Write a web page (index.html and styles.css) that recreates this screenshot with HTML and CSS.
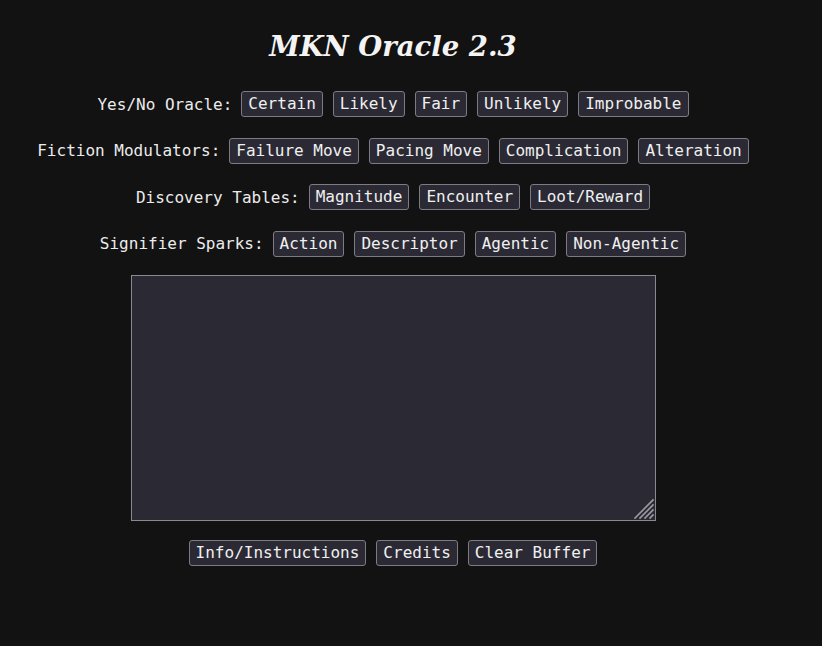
FILE: index.html
```html
<!DOCTYPE html>
<html>
<head>
<meta charset="utf-8">
<link rel="stylesheet" href="styles.css">
</head>
<body>
<main class="app">
  <h1 class="title">MKN Oracle 2.3</h1>
  <div class="row first"><span class="label">Yes/No Oracle:</span><button>Certain</button><button>Likely</button><button>Fair</button><button>Unlikely</button><button>Improbable</button></div>
  <div class="row"><span class="label">Fiction Modulators:</span><button>Failure Move</button><button>Pacing Move</button><button>Complication</button><button>Alteration</button></div>
  <div class="row"><span class="label">Discovery Tables:</span><button>Magnitude</button><button>Encounter</button><button>Loot/Reward</button></div>
  <div class="row"><span class="label">Signifier Sparks:</span><button>Action</button><button>Descriptor</button><button>Agentic</button><button>Non-Agentic</button></div>
  <div class="buffer-wrap">
    <textarea class="buffer"></textarea>
    <svg class="grip" width="24" height="24" viewBox="0 0 24 24" aria-hidden="true">
      <g stroke="#9a9aa0" stroke-width="1.6" stroke-linecap="square">
        <line x1="4" y1="22" x2="22" y2="4"/>
        <line x1="9" y1="22" x2="22" y2="9"/>
        <line x1="14" y1="22" x2="22" y2="14"/>
        <line x1="19" y1="22" x2="22" y2="19"/>
      </g>
    </svg>
  </div>
  <div class="row bottom"><button>Info/Instructions</button><button>Credits</button><button>Clear Buffer</button></div>
</main>
</body>
</html>
```
FILE: styles.css
```css
html, body {
  margin: 0;
  background: #121212;
}
body {
  padding: 0 8px;
  color: #ececec;
  font-family: "DejaVu Sans Mono", monospace;
  font-size: 16px;
}
.app {
  width: 770px;
  display: flex;
  flex-direction: column;
  align-items: center;
}
.title {
  margin: 24px 0 0;
  height: 44px;
  line-height: 44px;
  font-family: "DejaVu Serif", serif;
  font-style: italic;
  font-weight: bold;
  font-size: 27.5px;
  color: #f4f4f4;
}
.row {
  display: flex;
  align-items: center;
  gap: 10px;
  height: 26px;
  margin-top: 20.5px;
}
.row.first {
  margin-top: 23px;
}
.label {
  white-space: pre;
  color: #ececec;
  margin-right: -1px;
}
button {
  font-family: "DejaVu Sans Mono", monospace;
  font-size: 16px;
  color: #f0f0f0;
  background: #2b2a34;
  border: 1px solid #7d7c84;
  border-radius: 3px;
  height: 26px;
  padding: 0 6px;
  line-height: 24px;
}
.buffer-wrap {
  position: relative;
  margin-top: 18px;
  width: 525px;
  height: 246px;
}
.buffer {
  display: block;
  width: 525px;
  height: 246px;
  box-sizing: border-box;
  background: #2b2934;
  border: 1px solid #8a8990;
  border-radius: 0;
  color: #eee;
  font-family: "DejaVu Sans Mono", monospace;
  resize: none;
}
.grip {
  position: absolute;
  right: 1px;
  bottom: 1px;
  pointer-events: none;
}
.bottom {
  margin-top: 19px;
}
```
